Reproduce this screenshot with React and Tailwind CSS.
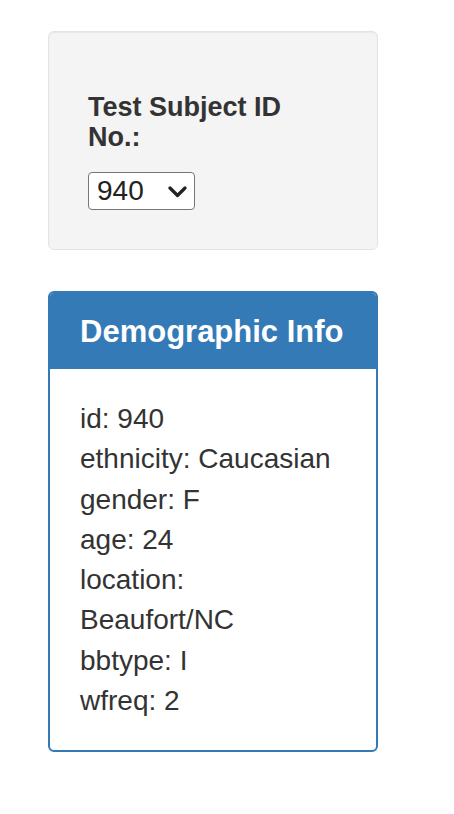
import { useState } from "react";

const subjects = {
  940: {
    id: 940,
    ethnicity: "Caucasian",
    gender: "F",
    age: 24,
    location: "Beaufort/NC",
    bbtype: "I",
    wfreq: 2,
  },
};

const App = () => {
  const [subjectId, setSubjectId] = useState("940");
  const info = subjects[subjectId] || subjects[940];

  return (
    <div className="min-h-[814px] bg-white font-['Liberation_Sans',Arial,sans-serif] text-[#333]">
      <div className="ml-[48px] w-[330px] pt-[31px]">
        <div className="rounded-[6px] border border-[#e3e3e3] bg-[#f4f4f4] px-[39px] pt-[60px] pb-[39px] shadow-[inset_0_1px_1px_rgba(0,0,0,0.05)]">
          <label
            htmlFor="selDataset"
            className="block text-[27px] font-bold leading-[30px] mb-[20px]"
          >
            Test Subject ID No.:
          </label>
          <div className="relative w-[107px]">
            <select
              id="selDataset"
              value={subjectId}
              onChange={(e) => setSubjectId(e.target.value)}
              className="block h-[38px] w-[107px] appearance-none rounded-[4px] border border-[#767676] bg-white pl-[8px] text-[28px] leading-[36px] text-[#222]"
            >
              <option value="940">940</option>
            </select>
            <svg
              className="pointer-events-none absolute right-[8px] top-[14px]"
              width="19"
              height="12"
              viewBox="0 0 19 12"
            >
              <path
                d="M2 2 L9.5 9.5 L17 2"
                fill="none"
                stroke="#222"
                strokeWidth="3.2"
                strokeLinecap="round"
                strokeLinejoin="round"
              />
            </svg>
          </div>
        </div>

        <div className="mt-[41px] rounded-[6px] border-2 border-[#337ab7] bg-white">
          <div className="flex h-[76px] items-center rounded-t-[4px] bg-[#337ab7] px-[30px]">
            <h3 className="text-[31px] font-bold text-white leading-none">
              Demographic Info
            </h3>
          </div>
          <div className="px-[30px] pt-[30px] pb-[29px] text-[28px] leading-[40.3px]">
            {Object.entries(info).map(([key, value]) => (
              <p key={key}>
                {key}: {value}
              </p>
            ))}
          </div>
        </div>
      </div>
    </div>
  );
};

export default App;
